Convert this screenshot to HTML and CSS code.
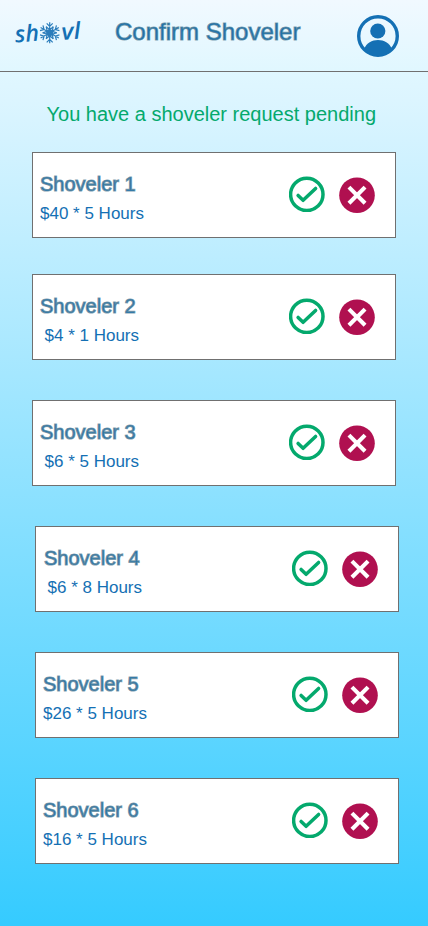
FILE: index.html
```html
<!DOCTYPE html>
<html lang="en">
<head>
<meta charset="utf-8">
<title>Confirm Shoveler</title>
<link rel="stylesheet" href="styles.css">
</head>
<body>
<svg class="defs" width="0" height="0">
  <symbol id="accept" viewBox="0 0 36 36">
    <circle cx="17.8" cy="18.4" r="16.2" fill="none" stroke="#04a96d" stroke-width="3.5"/>
    <path d="M9.1 19.4 14.1 24.3 26.6 12.4" fill="none" stroke="#04a96d" stroke-width="3.5" stroke-linecap="round" stroke-linejoin="round"/>
  </symbol>
  <symbol id="reject" viewBox="0 0 36 36">
    <circle cx="18" cy="18.2" r="17.8" fill="#b01050"/>
    <path d="M11.4 11.6 24.6 24.8M24.6 11.6 11.4 24.8" stroke="#fff" stroke-width="4.1" stroke-linecap="square"/>
  </symbol>
</svg>
<header class="header">
  <svg class="logo" viewBox="0 0 70 36" role="img" aria-label="shovl">
    <g class="logo-text">
      <text x="2.5" y="27.5" textLength="24" lengthAdjust="spacingAndGlyphs" transform="rotate(-5 3 27)">sh</text>
      <text x="49" y="25" textLength="19" lengthAdjust="spacingAndGlyphs" transform="rotate(-5 49 24)">vl</text>
    </g>
    <g transform="translate(36.7 17.8)" class="flake">
      <g id="arm"><path d="M0 0V-10.5M-3 -9.5 0 -6.5 3 -9.5M-3.6 -6 0 -3 3.6 -6"/></g>
      <use href="#arm" transform="rotate(60)"/>
      <use href="#arm" transform="rotate(120)"/>
      <use href="#arm" transform="rotate(180)"/>
      <use href="#arm" transform="rotate(240)"/>
      <use href="#arm" transform="rotate(300)"/>
      <circle r="3"/>
    </g>
  </svg>
  <h1 class="title">Confirm Shoveler</h1>
  <svg class="avatar" viewBox="0 0 42 42">
    <defs><clipPath id="face"><circle cx="21" cy="21" r="20"/></clipPath></defs>
    <circle cx="21" cy="21" r="19.3" fill="none" stroke="#1470b4" stroke-width="3.4"/>
    <g fill="#1470b4" clip-path="url(#face)">
      <circle cx="20.8" cy="16" r="7.6"/>
      <path d="M7 34C9.5 28 15 25 21 25S32.5 28 35 34V42H7Z"/>
    </g>
  </svg>
</header>
<main class="content">
  <p class="notice">You have a shoveler request pending</p>
  <section class="card first">
    <div class="info"><h2>Shoveler 1</h2><p>$40 * 5 Hours</p></div>
    <svg class="icon"><use href="#accept"/></svg><svg class="icon no"><use href="#reject"/></svg>
  </section>
  <section class="card">
    <div class="info centered"><h2>Shoveler 2</h2><p>$4 * 1 Hours</p></div>
    <svg class="icon"><use href="#accept"/></svg><svg class="icon no"><use href="#reject"/></svg>
  </section>
  <section class="card">
    <div class="info centered"><h2>Shoveler 3</h2><p>$6 * 5 Hours</p></div>
    <svg class="icon"><use href="#accept"/></svg><svg class="icon no"><use href="#reject"/></svg>
  </section>
  <section class="card shifted">
    <div class="info centered inset"><h2>Shoveler 4</h2><p>$6 * 8 Hours</p></div>
    <svg class="icon"><use href="#accept"/></svg><svg class="icon no"><use href="#reject"/></svg>
  </section>
  <section class="card shifted">
    <div class="info"><h2>Shoveler 5</h2><p>$26 * 5 Hours</p></div>
    <svg class="icon"><use href="#accept"/></svg><svg class="icon no"><use href="#reject"/></svg>
  </section>
  <section class="card shifted">
    <div class="info"><h2>Shoveler 6</h2><p>$16 * 5 Hours</p></div>
    <svg class="icon"><use href="#accept"/></svg><svg class="icon no"><use href="#reject"/></svg>
  </section>
</main>
</body>
</html>
```
FILE: styles.css
```css
* { box-sizing: border-box; margin: 0; }
body {
  width: 428px;
  height: 926px;
  overflow: hidden;
  font-family: "Liberation Sans", Arial, sans-serif;
  background: linear-gradient(#f1f9ff 0, #e0f7ff 72px, #dcf5ff 100px, #35cbff 926px);
}
.defs { display: block; height: 0; }
.header {
  display: flex;
  height: 72px;
  padding-left: 13px;
  border-bottom: 1px solid #707070;
}
.logo { width: 70px; height: 36px; margin-top: 15px; overflow: visible; }
.logo-text {
  font: italic 600 23px "Open Sans", sans-serif;
  fill: #1470b4;
}
.flake { fill: #2b7dbb; stroke: #2b7dbb; stroke-width: 1.2; }
.flake path { fill: none; }
.title {
  width: 188px;
  margin: 18px 0 0 32px;
  font-size: 24px;
  line-height: 28px;
  font-weight: 400;
  color: #1470b4;
  white-space: nowrap;
  -webkit-text-stroke: 1.1px rgba(85, 130, 150, .75);
}
.avatar { width: 42px; height: 42px; margin: 15px 0 0 54px; }
.content { display: flex; flex-direction: column; padding-left: 32px; }
.notice {
  margin: 31px 0 0 14.5px;
  font-size: 20px;
  line-height: 23px;
  color: #04a96d;
}
.card {
  display: flex;
  width: 364px;
  height: 86px;
  margin-top: 40px;
  padding-left: 7px;
  background: #fff;
  border: 1px solid #707070;
}
.card.first { margin: 26px 0 -4px; }
.shifted { margin-left: 3px; }
.info { width: 248.5px; padding-top: 20px; }
.info h2 {
  font-size: 20px;
  line-height: 23px;
  font-weight: 400;
  color: #1470b4;
  -webkit-text-stroke: 1.2px rgba(95, 135, 155, .8);
}
.info p {
  margin-top: 8px;
  font-size: 17px;
  line-height: 19px;
  color: #1470b4;
}
.centered p { padding-left: 4.5px; }
.inset h2 { margin-left: 1px; }
.icon { width: 36px; height: 36px; margin-top: 23px; }
.icon.no { margin: 24px 0 0 14px; }
```
